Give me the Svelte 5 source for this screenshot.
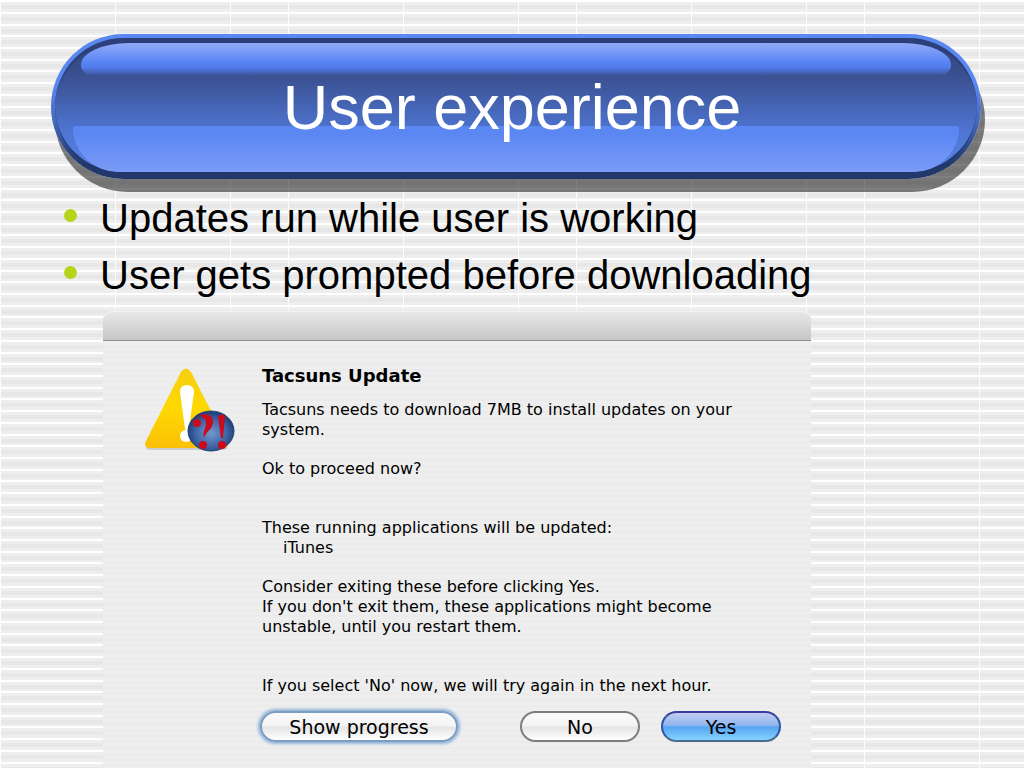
<!-- Presentation slide: glossy title pill, two bullets and the update prompt
     dialog, on a paper-like backdrop of fine white lines. -->
<script lang="ts">
  const title = "User experience";
  const bullets = [
    "Updates run while user is working",
    "User gets prompted before downloading",
  ];

  // The backdrop repeats every 288x82 px.
  const rows = [0, 12, 24, 35, 47, 59, 70];
  const columns = [0, 115, 230];

  let showProgress = $state(false);
  let answer = $state<"yes" | "no" | null>(null);
</script>

<main class="slide">
  <svg class="backdrop" aria-hidden="true">
    <defs>
      <pattern id="paper" width="288" height="82" patternUnits="userSpaceOnUse">
        <rect width="288" height="82" fill="#eeeeee" />
        {#each rows as y}
          <rect {y} width="288" height="2" fill="#ffffff" />
          <rect y={y + 5} width="288" height="4" fill="#e7e7e7" />
        {/each}
        {#each columns as x}
          <rect {x} width="1" height="82" fill="#fcfcfc" />
        {/each}
      </pattern>
    </defs>
    <rect width="100%" height="100%" fill="url(#paper)" />
  </svg>

  <header class="pill">
    <div class="body">
      <h1>{title}</h1>
    </div>
  </header>

  <ul class="bullets">
    {#each bullets as text}
      <li>{text}</li>
    {/each}
  </ul>

  <section class="dialog" role="dialog" aria-labelledby="dialog-title">
    <div class="titlebar"></div>
    <div class="content">
      <svg class="alert" viewBox="0 0 92 88" aria-hidden="true">
        <defs>
          <linearGradient id="sign" x1="0" y1="0" x2="0" y2="1">
            <stop offset="0" stop-color="#f5cf10" />
            <stop offset="0.5" stop-color="#ffd800" />
            <stop offset="1" stop-color="#fbc008" />
          </linearGradient>
          <radialGradient id="ball" cx="0.5" cy="0.55" r="0.55">
            <stop offset="0" stop-color="#7297cf" />
            <stop offset="0.6" stop-color="#4167a8" />
            <stop offset="1" stop-color="#1c386f" />
          </radialGradient>
        </defs>
        <path
          d="M36 6Q41 -1 46 6L82 76Q84 83 78 83H5Q-1 83 2 76Z"
          fill="#00000022"
        />
        <path
          d="M36 5Q41 -2 46 5L82 75Q84 81 78 81H5Q-2 81 1 74Z"
          fill="url(#sign)"
        />
        <path
          d="M35 25Q35 18 42 18Q49 18 49 25L44 62Q42 66 40 62Z"
          fill="#fff"
        />
        <circle cx="41" cy="69" r="6" fill="#fff" />
        <ellipse cx="66" cy="64" rx="23" ry="20" fill="url(#ball)" stroke="#27447b" />
        <g fill="#cc0a1c">
          <circle cx="52" cy="56" r="4" />
          <path
            d="M54 49C60 45 69 48 68 56C67 63 61 64 59 71C57 65 61 62 61 56C61 52 58 50 54 49Z"
          />
          <circle cx="58" cy="78" r="4" />
          <path d="M73 49Q77 46 80 49L78 71H76Z" />
          <circle cx="77" cy="78" r="4" />
        </g>
      </svg>

      <div class="message">
        <h2 id="dialog-title">Tacsuns Update</h2>
        <p>
          Tacsuns needs to download 7MB to install updates on your<br />system.
        </p>
        <p>Ok to proceed now?</p>
        <p class="spaced">
          These running applications will be updated:<br />
          <span class="app">iTunes</span>
        </p>
        <p>
          Consider exiting these before clicking Yes.<br />
          If you don't exit them, these applications might become<br />
          unstable, until you restart them.
        </p>
        <p class="spaced">
          If you select 'No' now, we will try again in the next hour.
        </p>
        <div class="actions">
          <button
            class="focused"
            type="button"
            aria-pressed={showProgress}
            onclick={() => (showProgress = !showProgress)}>Show progress</button
          >
          <button type="button" onclick={() => (answer = "no")}>No</button>
          <button class="default" type="button" onclick={() => (answer = "yes")}
            >Yes</button
          >
        </div>
      </div>
    </div>
  </section>
</main>

<style>
  :global(body) {
    margin: 0;
  }
  .slide {
    position: relative;
    z-index: 0;
    display: flex;
    flex-direction: column;
    box-sizing: border-box;
    min-height: 100vh;
    padding-top: 34px;
    color: #000;
    font-family: "Liberation Sans", Arial, sans-serif;
  }
  .backdrop {
    position: absolute;
    inset: 0;
    z-index: -1;
    width: 100%;
    height: 100%;
  }

  .pill {
    margin: 0 43px 0 51px;
    padding: 4px;
    border-radius: 73px;
    background: linear-gradient(#5b87f3 0 35%, #4468bd 60%, #22376a 90%);
    box-shadow: 4px 13px 0 rgba(0, 0, 0, 0.5);
  }
  .body {
    position: relative;
    z-index: 0;
    display: flex;
    align-items: center;
    justify-content: center;
    height: 129px;
    border-top: 5px solid #2c3f78;
    border-bottom: 3px solid #22376a;
    border-radius: 69px;
    background: linear-gradient(#31477f, #3a5090 25%, #4f76d4 70%, #5a82e4);
  }
  .body::before,
  .body::after {
    content: "";
    position: absolute;
    z-index: -1;
  }
  .body::before {
    inset: 0 26px auto;
    height: 33px;
    border-radius: 48px 48px 12px 12px / 22px 22px 11px 11px;
    background: linear-gradient(#92abf8, #5783f3 60%, #527bea 75%, #3a5090);
  }
  .body::after {
    inset: auto 18px 0;
    height: 46px;
    border-radius: 4px 4px 48px 48px / 2px 2px 46px 46px;
    background: linear-gradient(#5b87f3 15%, #7a9bf7);
  }
  h1 {
    margin: 0;
    padding: 0 8px 2px 0;
    color: #fff;
    font-size: 63px;
    font-weight: 400;
    line-height: 72px;
  }

  .bullets {
    margin: 11px 0 0;
    padding: 0 0 0 64px;
    list-style: none;
  }
  .bullets li {
    display: flex;
    gap: 23px;
    font-size: 40px;
    line-height: 57px;
  }
  .bullets li::before {
    content: "";
    width: 13px;
    height: 13px;
    margin-top: 19px;
    border-radius: 50%;
    background: #b5d51b;
  }

  .dialog {
    flex: 1;
    margin: 7px 213px 0 103px;
    border-radius: 9px 9px 0 0;
    background: repeating-linear-gradient(#eeeeee 0 4px, #ebebeb 4px 6px);
    font-family: "DejaVu Sans", sans-serif;
    font-size: 16px;
  }
  .titlebar {
    height: 29px;
    border-bottom: 1px solid #8e8e8e;
    border-radius: 9px 9px 0 0;
    background: linear-gradient(#e9e9e9, #c6c6c6);
    box-shadow: inset 0 1px 0 #f4f4f4;
  }
  .content {
    display: flex;
    gap: 25px;
    padding: 24px 30px 24px 42px;
  }
  .alert {
    flex: none;
    width: 92px;
    height: 88px;
    margin-top: 2px;
  }
  .message {
    flex: 1;
  }
  h2 {
    margin: 0 0 13px;
    font-size: 18px;
    line-height: 22px;
  }
  p {
    margin: 0 0 19px;
    line-height: 20px;
    white-space: nowrap;
  }
  p.spaced {
    margin-top: 39px;
  }
  .app {
    margin-left: 21px;
  }
  .actions {
    display: flex;
    gap: 21px;
    margin: -4px 0 0 -2px;
  }
  button {
    width: 120px;
    height: 31px;
    padding: 0;
    border: 2px solid #7d7d7d;
    border-radius: 16px;
    background: linear-gradient(#fbfbfb, #f4f4f4 48%, #e4e4e4 52%, #fff);
    color: #000;
    font: 19px "DejaVu Sans", sans-serif;
    line-height: 26px;
  }
  .focused {
    width: 198px;
    margin-right: auto;
    border-color: #7c9cc0;
    box-shadow: 0 0 3px 2px #8fb4dc;
  }
  .default {
    border-color: #3a3aa0 #2d55a8 #4b6b8c;
    background: linear-gradient(#c0cdf0, #8fb6ee 45%, #57a4f2 52%, #84d4ff);
  }
</style>
